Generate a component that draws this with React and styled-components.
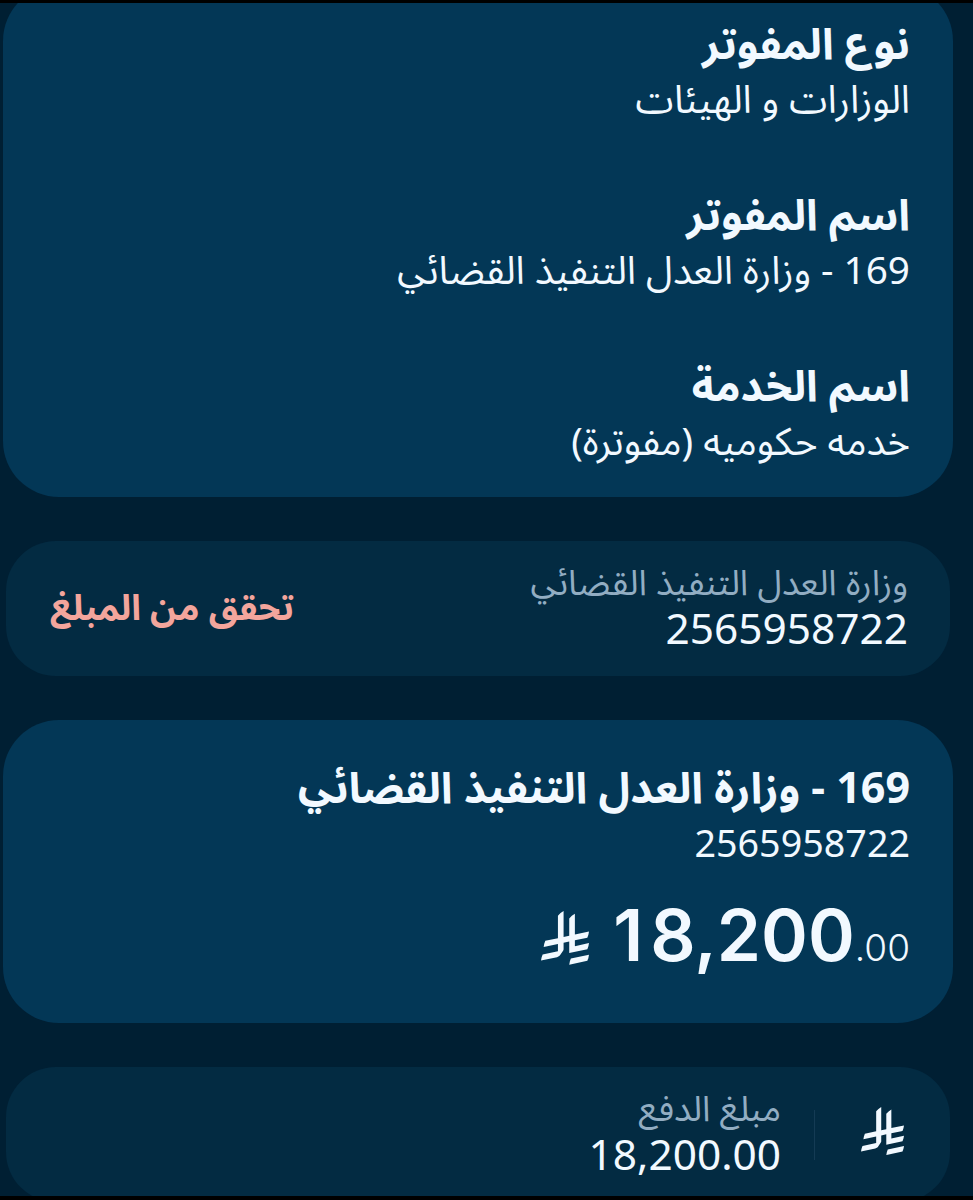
import React from "react";
import styled, { createGlobalStyle } from "styled-components";

const details = [
  { title: "نوع المفوتر", value: "الوزارات و الهيئات" },
  { title: "اسم المفوتر", value: "169 - وزارة العدل التنفيذ القضائي" },
  { title: "اسم الخدمة", value: "خدمه حكوميه (مفوترة)" },
];

const Riyal = ({ width }) => (
  <RiyalIcon $width={width} viewBox="0 0 1124.14 1256.39">
    <path d="M699.62 1113.02c-20.06 44.48-33.32 92.75-38.4 143.37l424.51-90.24c20.06-44.47 33.31-92.75 38.4-143.37l-424.51 90.24Z" />
    <path d="M1085.73 895.8c20.06-44.47 33.32-92.75 38.4-143.37l-330.68 70.33v-135.2l292.27-62.11c20.06-44.47 33.32-92.75 38.4-143.37l-330.68 70.27V66.13c-50.67 28.45-95.67 66.32-132.25 110.99v403.35l-132.25 28.11V0c-50.67 28.44-95.67 66.32-132.25 110.99v525.69l-295.91 62.88c-20.06 44.47-33.33 92.75-38.42 143.37l334.33-71.05v170.26l-358.3 76.14c-20.06 44.47-33.32 92.75-38.4 143.37l375.04-79.7c30.53-6.35 56.77-24.4 73.83-49.24l68.78-101.97c7.14-10.57 11.3-23.29 11.3-36.99v-149.98l132.25-28.11v270.4l424.53-90.28Z" />
  </RiyalIcon>
);

const App = () => {
  return (
    <Screen>
      <GlobalStyle />
      <DetailsCard>
        {details.map((item) => (
          <div key={item.title}>
            <Title>{item.title}</Title>
            <Value>{item.value}</Value>
          </div>
        ))}
      </DetailsCard>
      <Field>
        <div>
          <Label>وزارة العدل التنفيذ القضائي</Label>
          <FieldValue>2565958722</FieldValue>
        </div>
        <Action>تحقق من المبلغ</Action>
      </Field>
      <BillCard>
        <Title>169 - وزارة العدل التنفيذ القضائي</Title>
        <Value $numeric>2565958722</Value>
        <Amount>
          <Riyal width={48} />
          <Whole>18,200</Whole>
          <Fraction>.00</Fraction>
        </Amount>
      </BillCard>
      <Field>
        <Currency>
          <Riyal width={43} />
        </Currency>
        <div>
          <Label>مبلغ الدفع</Label>
          <FieldValue>18,200.00</FieldValue>
        </div>
      </Field>
    </Screen>
  );
};

export default App;

const GlobalStyle = createGlobalStyle`
  * {
    box-sizing: border-box;
  }

  body {
    margin: 0;
    background: #000;
  }
`;

const Screen = styled.main`
  direction: rtl;
  height: 1200px;
  padding: 0 20px 0 3px;
  border-top: 3px solid #000;
  border-bottom: 4px solid #000;
  overflow: hidden;
  display: flex;
  flex-direction: column;
  gap: 44px;
  background: #001f33;
  color: #f2f9ff;
  font-family: "Noto Sans", "Noto Sans Arabic UI", "Noto Sans Arabic",
    "DejaVu Sans", sans-serif;
`;

const Card = styled.section`
  flex: none;
  padding: 0 43px;
  border-radius: 56px;
  background: #033756;
`;

const DetailsCard = styled(Card)`
  height: 512px;
  margin-top: -18px;
  padding-top: 30px;
  display: flex;
  flex-direction: column;
  gap: 60px;
`;

const BillCard = styled(Card)`
  height: 303px;
  padding-top: 39px;
`;

const Title = styled.h2`
  margin: 0;
  font-size: 43px;
  font-weight: 700;
  line-height: 55px;
  white-space: nowrap;
`;

const Value = styled.p`
  margin: 0;
  font-size: ${(props) => (props.$numeric ? "37.7px" : "38.7px")};
  line-height: ${(props) => (props.$numeric ? "58px" : "56px")};
  white-space: nowrap;
`;

const Field = styled.section`
  flex: none;
  display: flex;
  align-items: flex-start;
  height: 135px;
  margin: 0 3px;
  padding: 18px 42px 0 44px;
  border-radius: 50px;
  background: #032b42;
`;

const Label = styled.p`
  margin: 0;
  color: #92adc2;
  font-size: 35.3px;
  line-height: 44px;
  white-space: nowrap;
`;

const FieldValue = styled.p`
  margin: 0;
  font-size: 42.4px;
  font-weight: 450;
  line-height: 49px;
`;

const Action = styled.span`
  margin-right: auto;
  padding-top: 22px;
  color: #f3a59c;
  font-size: 35.6px;
  font-weight: 700;
  line-height: 50px;
`;

const Amount = styled.div`
  direction: ltr;
  display: flex;
  justify-content: flex-end;
  align-items: baseline;
  margin-top: 18px;
  line-height: 90px;

  svg {
    transform: translateY(4px);
  }
`;

const Whole = styled.span`
  display: block;
  margin-left: 24px;
  font-family: Inter, sans-serif;
  font-size: 71px;
  font-weight: 600;

  /* the leading 1 is narrow, so it gets extra room */
  &::first-letter {
    letter-spacing: 7px;
  }
`;

const Fraction = styled.span`
  font-family: Inter, sans-serif;
  font-size: 37px;
  font-weight: 350;
`;

const Currency = styled.div`
  height: 50px;
  margin: 25px 4px 0 33px;
  padding-left: 46px;
  border-left: 1px solid #143b54;

  svg {
    margin-top: -3px;
  }
`;

const RiyalIcon = styled.svg`
  display: block;
  width: ${(props) => props.$width}px;
  fill: currentColor;
`;
